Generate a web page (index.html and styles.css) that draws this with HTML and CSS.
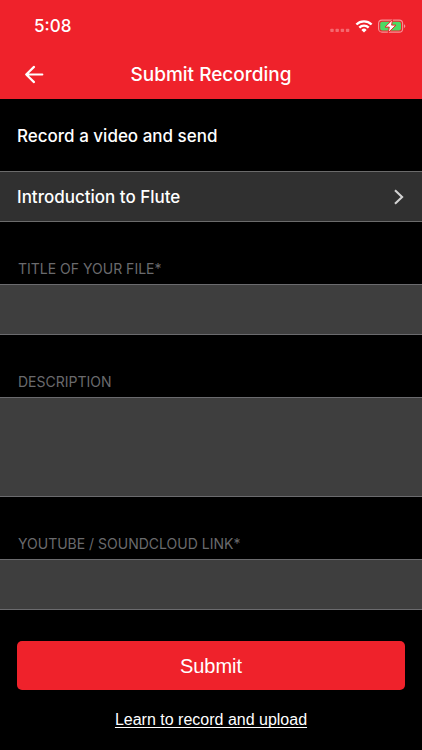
FILE: index.html
```html
<!DOCTYPE html>
<html lang="en">
<head>
<meta charset="utf-8">
<meta name="viewport" content="width=device-width, initial-scale=1">
<title>Submit Recording</title>
<link rel="stylesheet" href="styles.css">
</head>
<body>
<header class="header">
  <div class="status">
    <span class="time">5:08</span>
    <span class="indicators">
      <svg width="20" height="20" viewBox="0 0 20 20" fill="#fff" fill-opacity=".32" aria-hidden="true">
        <rect x="0.3" y="12.8" width="3.4" height="3.2" rx=".8"/><rect x="5.5" y="12.8" width="3.4" height="3.2" rx=".8"/><rect x="10.7" y="12.8" width="3.4" height="3.2" rx=".8"/><rect x="15.9" y="12.8" width="3.4" height="3.2" rx=".8"/>
      </svg>
      <svg width="18" height="20" viewBox="0 0 18 20" fill="none" stroke="#fff" stroke-width="2.4" aria-hidden="true">
        <path d="M1.4 8.5a10.8 10.8 0 0 1 15.2 0M4.3 11.6a6.7 6.7 0 0 1 9.4 0"/>
        <path d="M9 16.6l-2.6-2.7a3.7 3.7 0 0 1 5.2 0z" fill="#fff" stroke="none"/>
      </svg>
      <svg width="28" height="20" viewBox="0 0 28 20" aria-hidden="true">
        <rect x=".6" y="4.1" width="24" height="12" rx="3.4" fill="none" stroke="#fff" stroke-opacity=".5" stroke-width="1.1"/>
        <rect x="2.2" y="5.7" width="20.8" height="8.8" rx="2" fill="#4cd964"/>
        <path d="M26 8.2c1.8.7 1.8 3.1 0 3.8z" fill="#fff" fill-opacity=".5"/>
        <path d="M14.6 3.6L7 11.1h4.3l-1.1 5.6 7.8-7.6h-4.4z" fill="#fff" stroke="#ef222b" stroke-width="1"/>
      </svg>
    </span>
  </div>
  <div class="navbar">
    <button class="back" type="button" aria-label="Back">
      <svg width="20" height="20" viewBox="0 0 20 20" fill="none" stroke="#fff" stroke-width="2.2" stroke-linecap="round" stroke-linejoin="round"><path d="M18.3 9.5H2.2M10 1.9L2.2 9.5l7.8 7.6"/></svg>
    </button>
    <h1 class="title">Submit Recording</h1>
  </div>
</header>
<main>
  <h2 class="intro">Record a video and send</h2>
  <a class="lesson" href="#lesson">
    <span>Introduction to Flute</span>
    <svg width="12" height="18" viewBox="0 0 12 18" fill="none" stroke="#d2d2d2" stroke-width="2.1"><path d="M2 2.2L9.1 9 2 15.8"/></svg>
  </a>
  <form>
    <label class="label" for="file-title">TITLE OF YOUR FILE*</label>
    <input class="field" id="file-title" type="text">
    <label class="label" for="description">DESCRIPTION</label>
    <textarea class="field area" id="description"></textarea>
    <label class="label" for="media-link">YOUTUBE / SOUNDCLOUD LINK*</label>
    <input class="field" id="media-link" type="url">
    <div class="actions">
      <button class="submit" type="submit">Submit</button>
      <a class="learn" href="#learn">Learn to record and upload</a>
    </div>
  </form>
</main>
</body>
</html>
```
FILE: styles.css
```css
* { box-sizing: border-box; }

body {
  margin: 0;
  background: #000;
  color: #fff;
  font-family: "Liberation Sans", Arial, sans-serif;
  font-size: 17px;
  line-height: 20px;
}

.header {
  background: #ef222b;
  font-family: Inter, sans-serif;
}

.status {
  display: flex;
  align-items: center;
  justify-content: space-between;
  height: 50px;
  padding: 2px 16px 0 34px;
}

.time { font-weight: 500; }

.indicators {
  display: flex;
  align-items: center;
  gap: 5px;
}

.navbar {
  display: grid;
  grid-template-columns: 48px 1fr 48px;
  align-items: center;
  height: 49px;
}

.back {
  display: flex;
  justify-content: flex-end;
  padding: 0 4px 0 0;
  border: 0;
  background: none;
}

.title {
  margin: 0;
  font-size: 19px;
  font-weight: 500;
  text-align: center;
}

.intro,
.lesson {
  font-family: Inter, "Liberation Sans", sans-serif;
  font-size: 17px;
  font-weight: 500;
}

.intro {
  margin: 0;
  padding: 27px 17px 25px;
}

.lesson {
  display: flex;
  align-items: center;
  justify-content: space-between;
  height: 51px;
  padding: 0 17px;
  border: solid #6b6b6b;
  border-width: 1px 0;
  background: #303030;
  color: #fff;
  text-decoration: none;
}

.label {
  display: block;
  padding: 37px 18px 5px;
  color: #6a6a6d;
  font-family: Inter, sans-serif;
  font-size: 14px;
}

.field {
  display: block;
  width: 100%;
  height: 51px;
  padding: 0 17px;
  border: solid #6b6b6e;
  border-width: 1px 0;
  border-radius: 0;
  outline: 0;
  background: #3e3e3e;
  color: #fff;
  font: inherit;
}

.area {
  height: 100px;
  padding: 12px 17px;
  resize: none;
}

.actions {
  display: flex;
  flex-direction: column;
  align-items: center;
  gap: 20px;
  padding: 31px 17px 20px;
}

.submit {
  width: 100%;
  height: 49px;
  border: 0;
  border-radius: 5px;
  background: #ef222b;
  color: #fff;
  font: inherit;
  font-size: 20px;
}

.learn {
  color: #fff;
  font-size: 16px;
  text-decoration-skip-ink: none;
  text-underline-offset: 2px;
}
```
